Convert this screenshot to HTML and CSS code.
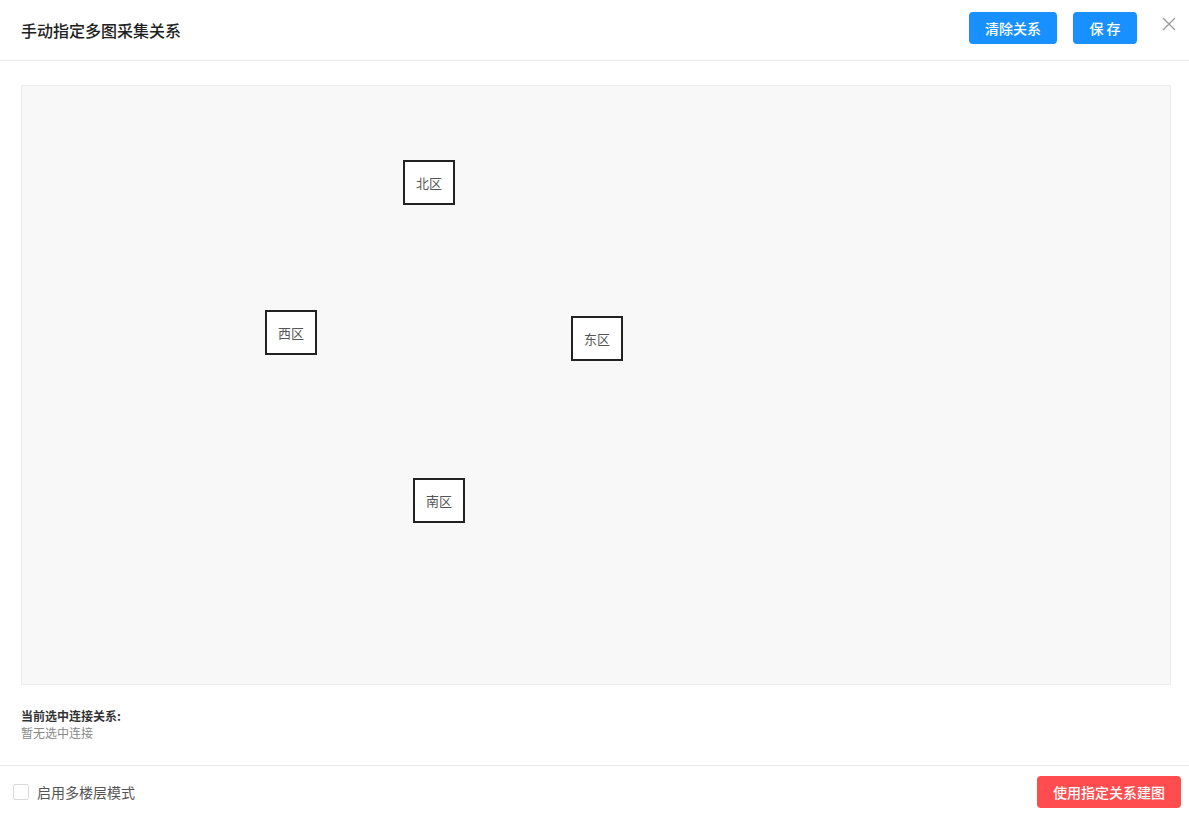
FILE: index.html
```html
<!DOCTYPE html>
<html lang="zh-CN">
<head>
    <meta charset="UTF-8">
    <title>手动指定多图采集关系</title>
    <link rel="stylesheet" href="styles.css">
</head>
<body>
    <div class="modal">
        <div class="modal-header">
            <h3 class="modal-title">手动指定多图采集关系</h3>
            <div class="header-actions">
                <button class="btn btn-primary btn-clear">清除关系</button>
                <button class="btn btn-primary btn-save">保 存</button>
                <button class="btn-close" aria-label="关闭">
                    <svg width="14" height="14" viewBox="0 0 14 14"><path d="M1 1L13 13M13 1L1 13" stroke="#999" stroke-width="1.3" fill="none"/></svg>
                </button>
            </div>
        </div>

        <div class="modal-body">
            <div class="canvas">
                <div class="node" style="left: 381px; top: 74px;">北区</div>
                <div class="node" style="left: 243px; top: 224px;">西区</div>
                <div class="node" style="left: 549px; top: 230px;">东区</div>
                <div class="node" style="left: 391px; top: 392px;">南区</div>
            </div>

            <div class="selection-info">
                <div class="info-label">当前选中连接关系:</div>
                <div class="info-empty">暂无选中连接</div>
            </div>
        </div>

        <div class="modal-footer">
            <label class="checkbox">
                <span class="checkbox-box"></span>
                <span class="checkbox-text">启用多楼层模式</span>
            </label>
            <button class="btn btn-danger">使用指定关系建图</button>
        </div>
    </div>
</body>
</html>
```

FILE: styles.css
```css
* {
    box-sizing: border-box;
}
body {
    margin: 0;
    font-family: "Noto Sans CJK SC", "Liberation Sans", sans-serif;
    color: #333;
    background: #fff;
}
.modal {
    width: 1189px;
    height: 818px;
    display: flex;
    flex-direction: column;
}
.modal-header {
    height: 61px;
    display: flex;
    align-items: center;
    justify-content: space-between;
    padding: 0 13px 0 21px;
    border-bottom: 1px solid #e8e8e8;
}
.modal-title {
    margin: 0;
    font-size: 16px;
    font-weight: 500;
    color: #222;
}
.header-actions {
    display: flex;
    align-items: center;
    margin-top: -4px;
}
.btn {
    height: 32px;
    border: none;
    border-radius: 4px;
    color: #fff;
    font-family: inherit;
    font-size: 14px;
    font-weight: 500;
    cursor: pointer;
}
.btn-primary {
    background-color: #1890ff;
}
.btn-clear {
    width: 88px;
}
.btn-save {
    width: 64px;
    margin-left: 16px;
}
.btn-close {
    background: none;
    border: none;
    padding: 0;
    margin-left: 25px;
    margin-top: -8px;
    width: 14px;
    height: 14px;
    cursor: pointer;
}
.modal-body {
    flex: 1;
    padding: 24px 18px 0 21px;
}
.canvas {
    position: relative;
    height: 600px;
    background: #f8f8f8;
    border: 1px solid #ebebeb;
}
.node {
    position: absolute;
    width: 52px;
    height: 45px;
    display: flex;
    align-items: center;
    justify-content: center;
    background: #fff;
    border: 2px solid #222;
    font-size: 13px;
    color: #555;
}
.selection-info {
    margin-top: 22px;
    font-size: 12px;
    line-height: 17px;
}
.info-label {
    font-weight: bold;
    color: #333;
}
.info-empty {
    color: #888;
}
.modal-footer {
    height: 53px;
    display: flex;
    align-items: center;
    justify-content: space-between;
    padding: 0 8px 0 13px;
    border-top: 1px solid #e8e8e8;
}
.checkbox {
    display: flex;
    align-items: center;
    cursor: pointer;
}
.checkbox-box {
    width: 16px;
    height: 16px;
    border: 1px solid #d9d9d9;
    border-radius: 2px;
    background: #fff;
}
.checkbox-text {
    margin-left: 8px;
    font-size: 14px;
    color: #555;
}
.btn-danger {
    width: 144px;
    background-color: #ff4d4f;
}
```
